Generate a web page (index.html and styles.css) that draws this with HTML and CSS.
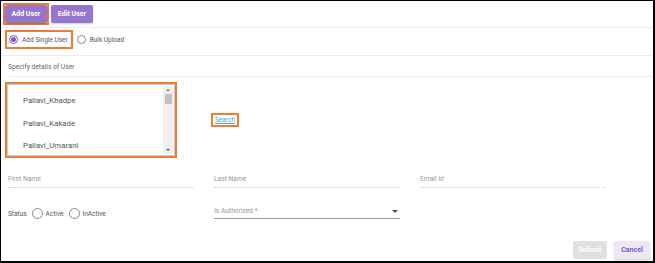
FILE: index.html
```html
<!DOCTYPE html>
<html lang="en">
<head>
    <meta charset="UTF-8">
    <meta name="viewport" content="width=device-width, initial-scale=1.0">
    <title>Users</title>
    <link rel="stylesheet" href="styles.css">
</head>
<body>

    <div class="page">
        <div class="toolbar">
            <div class="hl">
                <button class="btn btn-primary">Add User</button>
            </div>
            <button class="btn btn-primary">Edit User</button>
        </div>

        <div class="mode-row">
            <label class="radio hl"><span class="dot checked"></span>Add Single User</label>
            <label class="radio"><span class="dot"></span>Bulk Upload</label>
        </div>

        <div class="section-title">Specify details of User</div>

        <div class="user-pick">
            <div class="hl">
                <div class="listbox">
                    <ul class="user-list">
                        <li>Pallavi_Khadpe</li>
                        <li>Pallavi_Kakade</li>
                        <li>Pallavi_Umarani</li>
                    </ul>
                    <div class="scrollbar">
                        <span class="arrow up"></span>
                        <span class="thumb"></span>
                        <span class="arrow down"></span>
                    </div>
                </div>
            </div>
            <a href="#" class="search hl">Search</a>
        </div>

        <div class="fields">
            <div class="field">First Name</div>
            <div class="field">Last Name</div>
            <div class="field">Email Id</div>
        </div>

        <div class="fields status-row">
            <div class="status">
                <span>Status</span>
                <label class="radio"><span class="dot big"></span>Active</label>
                <label class="radio"><span class="dot big"></span>InActive</label>
            </div>
            <div class="select">
                <span>Is Authorized *</span>
                <span class="caret"></span>
            </div>
        </div>

        <div class="actions">
            <button class="btn btn-disabled">Submit</button>
            <button class="btn btn-light">Cancel</button>
        </div>
    </div>

</body>
</html>
```

FILE: styles.css
```css
body {
    margin: 0;
    padding: 0;
    background-color: #fff;
    font-family: 'Roboto', 'Liberation Sans', sans-serif;
    color: #555;
}

.page {
    width: 655px;
    height: 263px;
    box-sizing: border-box;
    border-style: solid;
    border-color: #000;
    border-width: 1px 2px 2px 1px;
    display: flex;
    flex-direction: column;
}

/* orange highlight boxes */
.hl {
    border: 2px solid #ed7d31;
}

.btn {
    border: none;
    border-radius: 2px;
    font-family: inherit;
    font-size: 7px;
    font-weight: 700;
    padding: 0;
    height: 18px;
    cursor: pointer;
}

.btn-primary {
    background-color: #9575cd;
    color: #fff;
    width: 42px;
    box-shadow: 0 1px 2px rgba(0, 0, 0, 0.2);
}

.btn-disabled {
    background-color: #e0e0e0;
    color: #fff;
    width: 34px;
}

.btn-light {
    background-color: #ede7f6;
    color: #7e57c2;
    width: 36px;
    box-shadow: 0 1px 2px rgba(0, 0, 0, 0.2);
}

.toolbar {
    display: flex;
    align-items: center;
    gap: 2px;
    height: 27px;
    padding: 0 2px;
    box-sizing: border-box;
    border-bottom: 1px solid #ececec;
}

.toolbar .hl {
    display: flex;
}

.mode-row {
    display: flex;
    align-items: flex-start;
    gap: 4px;
    height: 28px;
    padding: 2px 4px 0;
    box-sizing: border-box;
    border-bottom: 1px solid #ececec;
}

.radio {
    display: flex;
    align-items: center;
    gap: 4px;
    font-size: 6.5px;
    color: #555;
}

.mode-row .radio {
    height: 19px;
    box-sizing: border-box;
    padding: 0 3px 0 2px;
}

.mode-row .radio:not(.hl) {
    padding-left: 0;
}

.dot {
    width: 9px;
    height: 9px;
    box-sizing: border-box;
    border: 1px solid #888;
    border-radius: 50%;
    display: flex;
    align-items: center;
    justify-content: center;
}

.dot.big {
    width: 11px;
    height: 11px;
}

.dot.checked {
    border-color: #7e57c2;
}

.dot.checked::after {
    content: '';
    width: 5px;
    height: 5px;
    border-radius: 50%;
    background-color: #7e57c2;
}

.section-title {
    margin-left: 6px;
    height: 18px;
    padding: 2px 0 0 1px;
    display: flex;
    align-items: center;
    font-size: 6.7px;
    color: #666;
    border-bottom: 1px solid #ececec;
}

.user-pick {
    display: flex;
    align-items: center;
    gap: 34px;
    margin-top: 5px;
    padding-left: 4px;
}

.listbox {
    width: 168px;
    height: 72px;
    box-sizing: border-box;
    border: 1px solid #ccc;
    display: flex;
    justify-content: space-between;
    overflow: hidden;
}

.user-list {
    list-style: none;
    margin: 0;
    padding: 5px 0 0 15px;
    font-size: 7.8px;
    color: #555;
}

.user-list li {
    height: 22.5px;
    line-height: 22px;
}

.scrollbar {
    width: 10px;
    margin: 1px 1px 1px 0;
    background-color: #f0f0f0;
    display: flex;
    flex-direction: column;
    align-items: center;
    padding-top: 3px;
}

.arrow {
    width: 0;
    height: 0;
    border-left: 2px solid transparent;
    border-right: 2px solid transparent;
}

.arrow.up {
    border-bottom: 2px solid #777;
}

.arrow.down {
    border-top: 2px solid #555;
    margin-top: auto;
    margin-bottom: 3px;
}

.thumb {
    width: 7px;
    height: 10px;
    margin-top: 3px;
    background-color: #c1c1c1;
}

.search {
    font-size: 6.5px;
    color: #4da3e8;
    text-decoration: underline;
    padding: 1px 2px;
}

.fields {
    display: grid;
    grid-template-columns: 186px 186px 186px;
    column-gap: 20px;
    padding-left: 7px;
    margin-top: 17px;
}

.field {
    font-size: 6.7px;
    color: #999;
    padding-bottom: 4px;
    border-bottom: 1px dotted #ccc;
}

.status-row {
    margin-top: 19px;
    align-items: end;
}

.status {
    display: flex;
    align-items: center;
    gap: 3px;
    font-size: 6.5px;
    color: #555;
}

.status .radio {
    margin-left: 2px;
    gap: 3px;
}

.select {
    display: flex;
    justify-content: space-between;
    align-items: center;
    font-size: 6.7px;
    color: #999;
    padding-bottom: 3px;
    border-bottom: 1px solid #999;
}

.caret {
    width: 0;
    height: 0;
    margin-right: 2px;
    border-left: 3px solid transparent;
    border-right: 3px solid transparent;
    border-top: 3px solid #555;
}

.actions {
    margin-top: auto;
    display: flex;
    justify-content: flex-end;
    gap: 7px;
    padding: 0 3px 2px 0;
}
```
